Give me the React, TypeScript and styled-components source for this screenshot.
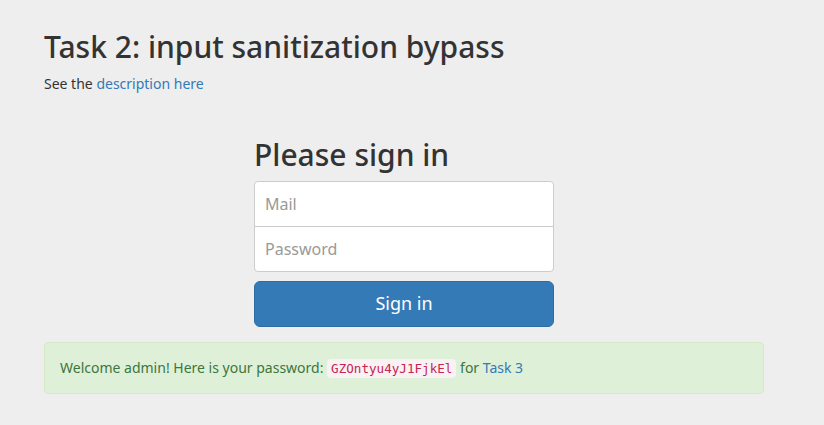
import React from 'react';
import styled, { createGlobalStyle } from 'styled-components';

const GlobalStyle = createGlobalStyle`
  html, body {
    margin: 0;
    padding: 0;
    background: #eeeeee;
  }
  body {
    font-family: "Noto Sans", "Open Sans", sans-serif;
    font-size: 14px;
    line-height: 1.42857;
    color: #333333;
  }
  * {
    box-sizing: border-box;
  }
`;

const Container = styled.div`
  width: 720px;
  margin-left: 44px;
`;

const Title = styled.h1`
  font-size: 30px;
  font-weight: 500;
  line-height: 1.1;
  margin: 30px 0 11px;
`;

const Lead = styled.p`
  margin: 0 0 10px;
`;

const Link = styled.a`
  color: #337ab7;
  text-decoration: none;
`;

const SignInForm = styled.form`
  width: 300px;
  margin: 44px auto 15px;
  display: flex;
  flex-direction: column;
`;

const FormHeading = styled.h2`
  font-size: 30px;
  font-weight: 500;
  line-height: 1.1;
  margin: 0 0 10px;
`;

const Input = styled.input<{ $position: 'top' | 'bottom' }>`
  display: block;
  width: 100%;
  height: 46px;
  padding: 10px;
  font-family: inherit;
  font-size: 16px;
  color: #555555;
  background: #ffffff;
  border: 1px solid #cccccc;
  border-radius: ${(p) => (p.$position === 'top' ? '4px 4px 0 0' : '0 0 4px 4px')};
  margin-bottom: ${(p) => (p.$position === 'top' ? '-1px' : '9px')};
  outline: none;

  &::placeholder {
    color: #999999;
  }
`;

const SubmitButton = styled.button`
  display: block;
  width: 100%;
  height: 46px;
  padding: 10px 16px;
  font-family: inherit;
  font-size: 18px;
  line-height: 1.33;
  color: #ffffff;
  background: #337ab7;
  border: 1px solid #2e6da4;
  border-radius: 6px;
`;

const Alert = styled.div`
  padding: 15px;
  background: #dff0d8;
  border: 1px solid #d6e9c6;
  border-radius: 4px;
  color: #3c763d;
`;

const Code = styled.code`
  font-family: "DejaVu Sans Mono", "Liberation Mono", monospace;
  font-size: 90%;
  padding: 2px 4px;
  color: #c7254e;
  background: #f9f2f4;
  border-radius: 4px;
`;

export default function App() {
  return (
    <>
      <GlobalStyle />
      <Container>
        <Title>Task 2: input sanitization bypass</Title>
        <Lead>
          See the <Link href="#">description here</Link>
        </Lead>
        <SignInForm onSubmit={(e) => e.preventDefault()}>
          <FormHeading>Please sign in</FormHeading>
          <Input $position="top" type="email" placeholder="Mail" />
          <Input $position="bottom" type="password" placeholder="Password" />
          <SubmitButton type="submit">Sign in</SubmitButton>
        </SignInForm>
        <Alert>
          Welcome admin! Here is your password: <Code>GZOntyu4yJ1FjkEl</Code> for{' '}
          <Link href="#">Task 3</Link>
        </Alert>
      </Container>
    </>
  );
}
